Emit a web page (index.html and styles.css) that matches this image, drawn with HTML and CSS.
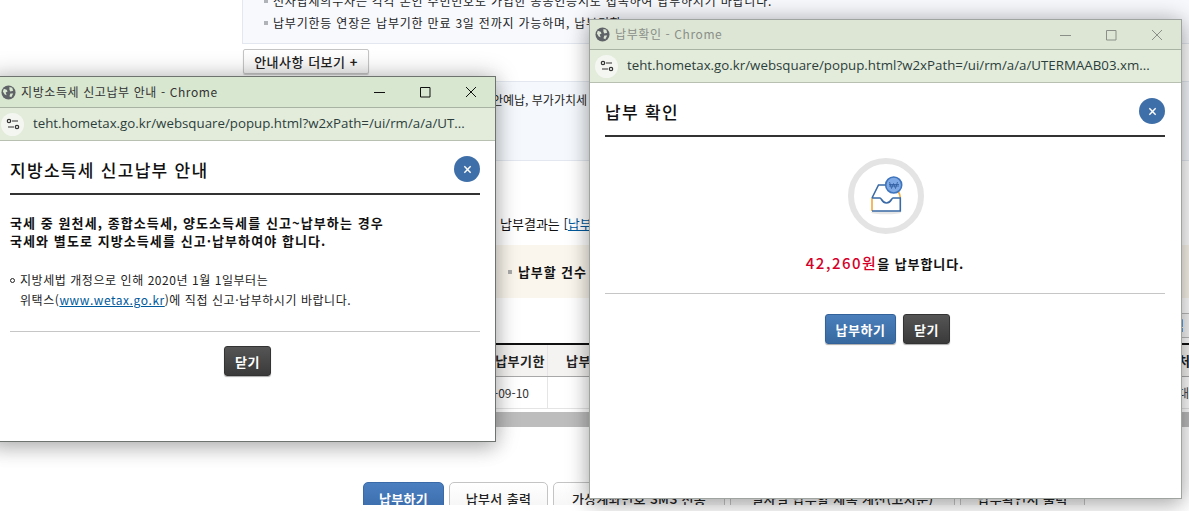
FILE: index.html
```
<!DOCTYPE html>
<html lang="ko">
<head>
<meta charset="utf-8">
<title>납부 확인</title>
<link rel="stylesheet" href="styles.css">
</head>
<body>
<div class="desktop">
  <main class="page">
    <section class="notice">
      <p class="notice-line">전자납세의무자는 각각 본인 주민번호로 가입한 공동인증서로 접속하여 납부하시기 바랍니다.</p>
      <p class="notice-line">납부기한등 연장은 납부기한 만료 3일 전까지 가능하며, 납부기한</p>
    </section>
    <button class="more">안내사항 더보기 <b>+</b></button>
    <section class="info"><p>안예납, 부가가치세 예정고지</p></section>
    <p class="result">납부결과는 [<a href="#">납부결과</a>]</p>
    <section class="band"><span class="square"></span><strong>납부할 건수</strong></section>
    <div class="tools"><span class="tool">출력</span></div>
    <div class="grid-wrap">
      <div class="grid-row grid-head">
        <span class="c-date">납부기한</span><span class="c-pay">납부세액</span><span class="c-end">처리</span>
      </div>
      <div class="grid-row grid-body">
        <span class="c-date">-09-10</span><span class="c-pay"></span><span class="c-end">대기</span>
      </div>
    </div>
    <div class="scrollbar"></div>
    <div class="actions">
      <button class="act primary">납부하기</button>
      <button class="act">납부서 출력</button>
      <button class="act">가상계좌번호 SMS 전송</button>
      <button class="act">일자별 납부할 세목 계산(고지분)</button>
      <button class="act">납부확인서 출력</button>
    </div>
  </main>

  <article class="window win-left">
    <header class="titlebar">
      <svg class="globe" viewBox="0 0 16 16"><circle cx="8" cy="8" r="7.500" fill="#5f6368"/><path d="M3 4l3 1 1 2-2 1 1 3-2-1-2-3zM9 2l3 1 1 3-3 1-1-2zM10 9l3 0-2 4-2-1z" fill="#d8e7cf"/></svg>
      <span class="wintitle">지방소득세 신고납부 안내 - Chrome</span>
      <svg class="winbtns" viewBox="0 0 103 14"><path d="M0 7.500h11M46.500 2.500h9.500v9.500h-9.500zM92 2l10 10M102 2l-10 10" fill="none" stroke="#111" stroke-width="1"/></svg>
    </header>
    <div class="addressbar">
      <span class="siteicon"><svg viewBox="0 0 14 14"><circle cx="3" cy="4" r="1.700" fill="none" stroke="#333" stroke-width="1.200"/><path d="M6 4h6M2 10h6" stroke="#333" stroke-width="1.200"/><circle cx="11" cy="10" r="1.700" fill="none" stroke="#333" stroke-width="1.200"/></svg></span>
      <span class="url">teht.hometax.go.kr/websquare/popup.html?w2xPath=/ui/rm/a/a/UT...</span>
    </div>
    <div class="popup">
      <div class="popup-head">
        <h1>지방소득세 신고납부 안내</h1>
        <span class="closebtn"><svg viewBox="0 0 10 10"><path d="M1.500 1.500l7 7M8.500 1.500l-7 7" stroke="#fff" stroke-width="1.600"/></svg></span>
      </div>
      <p class="lead">국세 중 원천세, 종합소득세, 양도소득세를 신고~납부하는 경우<br>국세와 별도로 지방소득세를 신고·납부하여야 합니다.</p>
      <p class="bullet"><i class="ring"></i>지방세법 개정으로 인해 2020년 1월 1일부터는<br>위택스(<a href="#">www.wetax.go.kr</a>)에 직접 신고·납부하시기 바랍니다.</p>
      <div class="popup-foot"><button class="btn dark">닫기</button></div>
    </div>
  </article>

  <article class="window win-right">
    <header class="titlebar inactive">
      <svg class="globe" viewBox="0 0 16 16"><circle cx="8" cy="8" r="7.500" fill="#5f6368"/><path d="M3 4l3 1 1 2-2 1 1 3-2-1-2-3zM9 2l3 1 1 3-3 1-1-2zM10 9l3 0-2 4-2-1z" fill="#dde6d5"/></svg>
      <span class="wintitle">납부확인 - Chrome</span>
      <svg class="winbtns" viewBox="0 0 103 14"><path d="M0 7.500h11M46.500 2.500h9.500v9.500h-9.500zM92 2l10 10M102 2l-10 10" fill="none" stroke="#8a9088" stroke-width="1"/></svg>
    </header>
    <div class="addressbar">
      <span class="siteicon"><svg viewBox="0 0 14 14"><circle cx="3" cy="4" r="1.700" fill="none" stroke="#333" stroke-width="1.200"/><path d="M6 4h6M2 10h6" stroke="#333" stroke-width="1.200"/><circle cx="11" cy="10" r="1.700" fill="none" stroke="#333" stroke-width="1.200"/></svg></span>
      <span class="url">teht.hometax.go.kr/websquare/popup.html?w2xPath=/ui/rm/a/a/UTERMAAB03.xm...</span>
    </div>
    <div class="popup">
      <div class="popup-head">
        <h1>납부 확인</h1>
        <span class="closebtn"><svg viewBox="0 0 10 10"><path d="M1.500 1.500l7 7M8.500 1.500l-7 7" stroke="#fff" stroke-width="1.600"/></svg></span>
      </div>
      <div class="emblem">
        <svg viewBox="0 0 78 78" width="78" height="78">
          <circle cx="39" cy="39" r="35" fill="#fff" stroke="#e4e4e4" stroke-width="6"/>
          <ellipse cx="39" cy="55.500" rx="15" ry="1.800" fill="#e6e6e6"/>
          <path d="M25 41V54M51 34q2 3 2.300 7" fill="none" stroke="#f2a93b" stroke-width="1.600"/>
          <path d="M25 41l6.500-13H40M25 41h8c1.500 0 2 5 6.500 5s5-5 6.500-5h7.300V54H25" fill="none" stroke="#3a6aa5" stroke-width="1.600"/>
          <circle cx="46.700" cy="28" r="8" fill="#7fa9e4" stroke="#3f74bd" stroke-width="1.600"/>
          <path d="M42.500 25l2 6.500 2-5 2 5 2-6.500M42 27.500h10M42 29h10" fill="none" stroke="#2f5c9e" stroke-width=".8"/>
        </svg>
      </div>
      <p class="amount"><em>42,260원</em>을 납부합니다.</p>
      <div class="popup-foot center-foot"><button class="btn blue">납부하기</button><button class="btn dark">닫기</button></div>
    </div>
  </article>
</div>
</body>
</html>
```
FILE: styles.css
```
* { box-sizing: border-box; }
html, body { margin: 0; padding: 0; background: #fff; }
body { font-family: "Noto Sans CJK KR", "Liberation Sans", sans-serif; font-size: 12px; color: #111; }
p, h1 { margin: 0; }
a { color: #005a9c; }
button { font-family: inherit; cursor: pointer; }

.desktop { position: relative; width: 1189px; height: 511px; overflow: hidden; background: #fff; }

/* page behind the popups */
.page { height: 505px; overflow: hidden; padding-left: 242px; }
.notice { margin-top: -10px; height: 54px; background: #f7f9fd; border: 1px solid #e3e8f0; border-top: 0; border-right: 0; padding: 0 0 0 30px; width: 947px; overflow: hidden; }
.notice-line { position: relative; height: 22px; line-height: 22px; font-size: 12px; letter-spacing: .8px; white-space: nowrap; color: #222; }
.notice-line::before { content: ""; position: absolute; left: -9px; top: 9px; width: 4px; height: 4px; background: #b0b4b8; }
.more { display: block; margin: 5px 0 0 1px; width: 126px; height: 25px; padding: 0; background: linear-gradient(#fff, #f4f4f4); border: 1px solid #c4c4c4; border-radius: 2px; box-shadow: 0 1px 1px #ccc; font-size: 13px; font-weight: 500; letter-spacing: .5px; color: #222; }
.info { margin-top: 7px; width: 947px; height: 80px; background: #f5f8fc; border-top: 1px solid #e3e8f0; border-bottom: 1px solid #e3e8f0; padding: 9px 0 0 250px; color: #222; white-space: nowrap; }
.result { margin-top: 54px; padding-left: 258px; font-size: 13px; line-height: 18px; color: #111; white-space: nowrap; }
.band { margin: 12px 0 0 -20px; width: 967px; height: 53px; background: #faf6ed; padding-left: 286px; display: flex; align-items: center; gap: 6px; }
.square { width: 4px; height: 4px; background: #aaa; }
.band strong { font-size: 13px; font-weight: 700; letter-spacing: .9px; }
.tools { height: 46px; display: flex; justify-content: flex-end; padding: 15px 0 0 0; width: 947px; }
.tool { width: 60px; height: 25px; line-height: 21px; border: 1px solid #bbb; border-right: 0; padding-left: 30px; font-size: 13px; background: #f7f7f7; white-space: nowrap; overflow: hidden; }
.grid-wrap { margin-left: -20px; width: 967px; border-top: 2px solid #111; margin-top: -1px; }
.grid-row { display: flex; }
.grid-row span { white-space: nowrap; overflow: hidden; }
.grid-head { height: 32px; line-height: 31px; background: #f4f3f1; border-bottom: 1px solid #a8a8a8; font-size: 13px; font-weight: 700; letter-spacing: .5px; color: #222; }
.grid-body { height: 32px; line-height: 32px; color: #333; border-bottom: 1px solid #e4e4e4; }
.c-date { width: 326px; text-align: right; padding-right: 2px; border-right: 1px solid #e5e5e5; }
.grid-body .c-date { padding-right: 18px; }
.c-pay { flex: 1; padding-left: 18px; }
.c-end { flex: none; width: 11px; }
.scrollbar { margin: 3px 0 0 -20px; width: 967px; height: 15px; background: #bdbdbd; }
.actions { display: grid; grid-template-columns: 81px 99px 172px 225px 125px; column-gap: 5px; margin: 55px 0 0 121px; }
.act { height: 32px; padding: 0; background: linear-gradient(#fff, #f4f4f4); border: 1px solid #c4c4c4; border-radius: 5px 5px 0 0; font-size: 13px; font-weight: 500; letter-spacing: .35px; color: #222; white-space: nowrap; overflow: hidden; }
.act.primary { background: linear-gradient(#4a7fc0, #3a6aa8); border-color: #3a6aa8; color: #fff; font-weight: 700; }

/* chrome windows on the desktop */
.window { position: absolute; background: #fff; border: 1px solid #6f736f; box-shadow: 0 0 22px rgba(0,0,0,.28), 0 8px 18px rgba(0,0,0,.14); display: flex; flex-direction: column; }
.win-left { left: -10px; top: 76px; width: 506px; height: 366px; }
.win-right { left: 589px; top: 19px; width: 593px; height: 480px; border-color: #a0a4a0; }

.titlebar { flex: none; height: 31px; display: flex; align-items: center; background: #d8e7cf; border-bottom: 1px solid #a9b3a3; padding: 0 18px 0 10px; }
.titlebar.inactive { height: 30px; background: #dde6d5; padding-left: 5px; }
.titlebar.inactive .wintitle { color: #8a8f88; }
.globe { flex: none; width: 15px; height: 15px; margin-right: 5px; }
.wintitle { flex: 1; padding-bottom: 2px; font-size: 12px; letter-spacing: .6px; color: #333; white-space: nowrap; }
.winbtns { flex: none; width: 103px; height: 14px; }

.addressbar { flex: none; height: 33px; display: flex; align-items: center; gap: 9px; background: #e3ecdb; border-bottom: 1px solid #b8c0b2; padding: 0 8px 0 10px; }
.win-right .addressbar { padding-left: 5px; }
.siteicon { flex: none; width: 23px; height: 23px; border-radius: 50%; background: #f4f7f1; display: flex; align-items: center; justify-content: center; }
.siteicon svg { width: 14px; height: 14px; }
.url { padding-bottom: 2px; font-family: "Open Sans", "Noto Sans", sans-serif; font-size: 13.300px; color: #2c3e3c; white-space: nowrap; overflow: hidden; }

.popup { flex: 1; padding: 0 16px 0 15px; display: flex; flex-direction: column; }
.win-left .popup { padding: 0 15px 0 19px; }
.popup-head { height: 54px; padding-top: 4px; display: flex; align-items: center; justify-content: space-between; border-bottom: 2px solid #333; }
.popup-head h1 { font-size: 17px; font-weight: 500; letter-spacing: 1.300px; color: #111; }
.closebtn { width: 26px; height: 26px; border-radius: 50%; background: #3f6fa8; display: flex; align-items: center; justify-content: center; }
.closebtn svg { width: 9px; height: 9px; }

.lead { margin-top: 19px; font-size: 13px; font-weight: 700; line-height: 18px; letter-spacing: 1.080px; color: #111; }
.bullet { position: relative; margin-top: 20px; padding-left: 10px; font-size: 12px; line-height: 20px; letter-spacing: .55px; color: #222; }
.ring { position: absolute; left: 0; top: 8px; width: 5px; height: 5px; border: 1px solid #222; border-radius: 50%; }
.popup-foot { margin-top: 21px; padding: 14px 0 0 5px; border-top: 1px solid #c6c6c6; display: flex; justify-content: center; gap: 7px; }
.btn { height: 30px; padding: 0; border-radius: 3px; font-size: 13px; font-weight: 700; letter-spacing: .5px; color: #fff; border: 1px solid #333; box-shadow: 0 1px 1px #aaa; }
.btn.dark { width: 47px; background: linear-gradient(#555, #3a3a3a); }
.btn.blue { width: 71px; background: linear-gradient(#4a7fbc, #38699f); border-color: #33619a; }
.center-foot { margin-top: 19px; padding-top: 20px; }
.emblem { margin-top: 20px; padding-left: 1px; display: flex; justify-content: center; }
.amount { margin-top: 18px; text-align: center; font-size: 13px; font-weight: 700; letter-spacing: .9px; line-height: 20px; color: #111; }
.amount em { font-style: normal; color: #d4002a; font-size: 15px; font-weight: 500; letter-spacing: 1.500px; }
```
